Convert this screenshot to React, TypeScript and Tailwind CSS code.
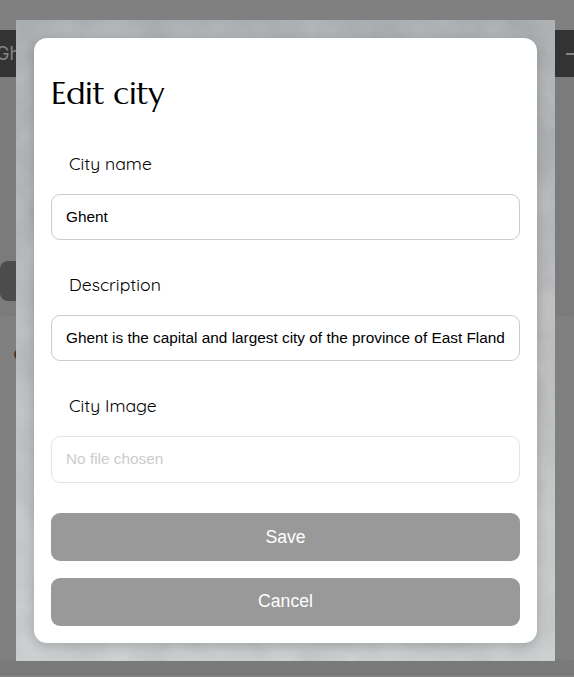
import type { ReactNode } from "react";

function Label({ children }: { children: string }) {
  return (
    <label className="ml-[18px] block h-6 font-['Quicksand','Lato',sans-serif] text-[17.6px] leading-[22px] text-black">
      {children}
    </label>
  );
}

function Field({ className, children }: { className: string; children: ReactNode }) {
  return (
    <div className={`flex items-center overflow-hidden whitespace-nowrap rounded-[9px] border px-[14px] text-[15.36px] ${className}`}>
      {children}
    </div>
  );
}

function ActionButton({ className = "", children }: { className?: string; children: string }) {
  return (
    <button className={`h-12 w-full shrink-0 rounded-[9px] bg-[#999999] text-[17.6px] leading-6 text-white ${className}`}>
      {children}
    </button>
  );
}

function PageBehind() {
  return (
    <div className="flex h-full flex-col bg-[#808080]">
      <header className="mt-[30px] flex h-[47px] shrink-0 items-center justify-between overflow-hidden bg-[#333333] text-[#858585]">
        <span className="-ml-[4px] font-['Inter',sans-serif] text-[18px]">Gh</span>
        <span className="mr-[-3px] h-[2px] w-[11px] bg-[#858585]" />
      </header>
      <main className="flex h-[238px] shrink-0 flex-col bg-[#7b7b7b] pt-[184px]">
        <div className="h-10 w-24 rounded-[8px] bg-[#4c4c4c]" />
      </main>
      <section className="mr-[-1px] h-[345px] shrink-0 rounded-[8px] border-y border-[#7c7c7c] bg-[#808080] pt-[33px]">
        <div className="ml-[14px] size-[11px] rounded-full bg-[#553311]" />
      </section>
      <footer className="h-[15px] shrink-0 border-b border-[#777777] bg-[#7a7a7a]" />
    </div>
  );
}

function StoneTexture() {
  return (
    <svg className="absolute inset-0 size-full" aria-hidden="true">
      <defs>
        <linearGradient id="stone" x1="0" y1="0" x2="0" y2="1">
          <stop offset="0" stopColor="#acb0b2" />
          <stop offset="0.45" stopColor="#bbbdbf" />
          <stop offset="1" stopColor="#cccfd0" />
        </linearGradient>
        <filter id="grain" x="0" y="0" width="100%" height="100%" colorInterpolationFilters="sRGB">
          <feTurbulence type="fractalNoise" baseFrequency="0.025" numOctaves="4" seed="6" />
          <feColorMatrix type="matrix" values="1.4 0 0 0 -0.05  1.4 0 0 0 -0.05  1.4 0 0 0 -0.05  0 0 0 0 0.06" />
        </filter>
      </defs>
      <rect width="100%" height="100%" fill="url(#stone)" />
      <rect width="100%" height="100%" filter="url(#grain)" />
    </svg>
  );
}

export default function App() {
  return (
    <div className="relative h-[677px] w-[574px] overflow-hidden font-['Liberation_Sans',Arial,sans-serif]">
      <PageBehind />
      <div className="absolute left-4 top-5 h-[641px] w-[539px] overflow-hidden p-[18px]">
        <StoneTexture />
        <section className="relative flex h-[605px] w-[503px] flex-col rounded-[13px] bg-white px-[17px] pt-[34px] shadow-[0_4px_12px_rgba(0,0,0,0.18)]">
          <h1 className="h-[42px] font-['Marcellus','Lato',sans-serif] text-[32px] leading-[42px] tracking-[-0.45px] text-black">
            Edit city
          </h1>
          <div className="mt-[38px]"><Label>City name</Label></div>
          <Field className="mt-[18px] h-[46px] shrink-0 border-[#cccccc] text-black">Ghent</Field>
          <div className="mt-[33px]"><Label>Description</Label></div>
          <Field className="mt-[18px] h-[46px] shrink-0 border-[#cccccc] text-black">
            Ghent is the capital and largest city of the province of East Fland
          </Field>
          <div className="mt-[33px]"><Label>City Image</Label></div>
          <Field className="mt-[18px] h-[47px] shrink-0 border-[#e4e4e4] pb-[2px] text-[#cccccc]">No file chosen</Field>
          <div className="mt-[30px] flex flex-col gap-[17px]">
            <ActionButton>Save</ActionButton>
            <ActionButton className="pb-[2px]">Cancel</ActionButton>
          </div>
        </section>
      </div>
    </div>
  );
}
